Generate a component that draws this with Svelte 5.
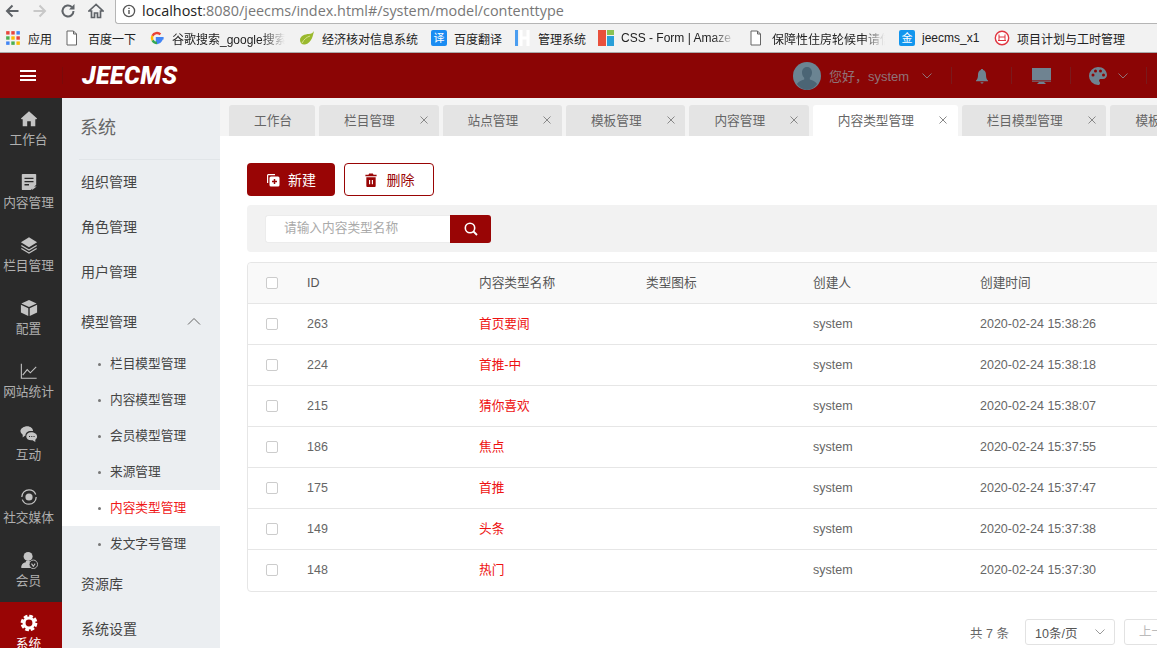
<script>
  const bookmarks = [
    { icon: 'apps', label: '应用', w: 60, lw: 26 },
    { icon: 'doc', label: '百度一下', w: 84, lw: 50 },
    { icon: 'g', label: '谷歌搜索_google搜索', w: 150, lw: 113, fade: true },
    { icon: 'leaf', label: '经济核对信息系统', w: 132, lw: 97 },
    { icon: 'yi', label: '百度翻译', w: 84, lw: 50 },
    { icon: 'h', label: '管理系统', w: 83, lw: 50 },
    { icon: 'css', label: 'CSS - Form | Amaze', w: 151, lw: 114, fade: true },
    { icon: 'doc', label: '保障性住房轮候申请信', w: 150, lw: 113, fade: true },
    { icon: 'jin', label: 'jeecms_x1', w: 95, lw: 60 },
    { icon: 'bot', label: '项目计划与工时管理', w: 140, lw: 110 }
  ];
  const rail = [
    { icon: 'home', label: '工作台' },
    { icon: 'content', label: '内容管理' },
    { icon: 'layers', label: '栏目管理' },
    { icon: 'cube', label: '配置' },
    { icon: 'chart', label: '网站统计' },
    { icon: 'chat', label: '互动' },
    { icon: 'media', label: '社交媒体' },
    { icon: 'user', label: '会员' },
    { icon: 'gear', label: '系统', active: true }
  ];
  const topMenu = ['组织管理', '角色管理', '用户管理'];
  const subMenu = ['栏目模型管理', '内容模型管理', '会员模型管理', '来源管理', '内容类型管理', '发文字号管理'];
  const tabs = [
    { label: '工作台', fixed: true },
    { label: '栏目管理' },
    { label: '站点管理' },
    { label: '模板管理' },
    { label: '内容管理' },
    { label: '内容类型管理', active: true },
    { label: '栏目模型管理' },
    { label: '模板类型管理' }
  ];
  const rows = [
    { id: 263, name: '首页要闻', time: '2020-02-24 15:38:26' },
    { id: 224, name: '首推-中', time: '2020-02-24 15:38:18' },
    { id: 215, name: '猜你喜欢', time: '2020-02-24 15:38:07' },
    { id: 186, name: '焦点', time: '2020-02-24 15:37:55' },
    { id: 175, name: '首推', time: '2020-02-24 15:37:47' },
    { id: 149, name: '头条', time: '2020-02-24 15:37:38' },
    { id: 148, name: '热门', time: '2020-02-24 15:37:30' }
  ];
</script>

<div class="page">
  <div class="toolbar">
    <div class="nav-buttons">
      <svg class="nav" viewBox="0 0 16 16"><path d="M14.500 8H3M8.500 2.500 3 8l5.500 5.500" fill="none" stroke="#5f6368" stroke-width="2"/></svg>
      <svg class="nav" viewBox="0 0 16 16"><path d="M1.500 8H13M7.500 2.500 13 8l-5.500 5.500" fill="none" stroke="#c8c8c8" stroke-width="2"/></svg>
      <svg class="nav" viewBox="0 0 16 16"><path d="M13.500 8a5.500 5.500 0 1 1-1.700-4" fill="none" stroke="#5f6368" stroke-width="2"/><path d="M14.500 1v5.500H9z" fill="#5f6368"/></svg>
      <svg class="nav" viewBox="0 0 16 16"><path d="M8 1.500 1 8h2.500v6.500h3V10h3v4.500h3V8H15z" fill="none" stroke="#5f6368" stroke-width="1.700"/></svg>
    </div>
    <div class="omnibox">
      <svg class="info" viewBox="0 0 14 14"><circle cx="7" cy="7" r="5.600" fill="none" stroke="#555" stroke-width="1.300"/><path d="M7 6v4M7 3.800v1.200" stroke="#555" stroke-width="1.400"/></svg>
      <span class="url"><span class="host">localhost</span>:8080/jeecms/index.html#/system/model/contenttype</span>
    </div>
  </div>

  <div class="bookmarks">
    {#each bookmarks as b}
      <div class="bookmark" style="width:{b.w}px">
        <span class="bm-icon">
          {#if b.icon === 'apps'}
            <svg viewBox="0 0 14 14">
              <g fill="#e8453c"><rect x="1" y="1" width="3" height="3"/><rect x="5.500" y="1" width="3" height="3"/></g>
              <rect x="10" y="1" width="3" height="3" fill="#4285f4"/>
              <rect x="1" y="5.500" width="3" height="3" fill="#4caf50"/>
              <rect x="5.500" y="5.500" width="3" height="3" fill="#fbbc05"/>
              <rect x="10" y="5.500" width="3" height="3" fill="#e8453c"/>
              <rect x="1" y="10" width="3" height="3" fill="#4285f4"/>
              <rect x="5.500" y="10" width="3" height="3" fill="#4caf50"/>
              <rect x="10" y="10" width="3" height="3" fill="#fbbc05"/>
            </svg>
          {:else if b.icon === 'doc'}
            <svg viewBox="0 0 14 16"><path d="M1 1H7.500l3 3v11H1zM7.500 1v3h3" fill="#fff" stroke="#666"/></svg>
          {:else if b.icon === 'g'}
            <svg viewBox="0 0 16 16">
              <path d="M14.600 8.200H8v2.600h3.800A4.200 4.200 0 0 1 8 13" fill="none" stroke="#4285f4" stroke-width="2.400"/>
              <path d="M8 13a5 5 0 0 1-4.500-2.800" fill="none" stroke="#34a853" stroke-width="2.400"/>
              <path d="M3.500 10.200a5 5 0 0 1 0-4.400" fill="none" stroke="#fbbc05" stroke-width="2.400"/>
              <path d="M3.500 5.800A5 5 0 0 1 11.400 4.400" fill="none" stroke="#ea4335" stroke-width="2.400"/>
            </svg>
          {:else if b.icon === 'leaf'}
            <svg viewBox="0 0 16 16"><path d="M15 1C14 5 13 13 6 14.500 3 15 1 13 1 10 1 6 6 4 10 4c2 0 4-1 5-3z" fill="#9ab92e"/><path d="M3 13c2-4 5-6 8-7" stroke="#d5e38c" fill="none"/></svg>
          {:else if b.icon === 'yi'}
            <span class="square blue">译</span>
          {:else if b.icon === 'h'}
            <svg viewBox="0 0 16 16"><rect x="0" y="0" width="3" height="16" fill="#4a9df0"/><path d="M6 0v16M13 0v16M6 8h7" stroke="#fff" stroke-width="3" fill="none"/></svg>
          {:else if b.icon === 'css'}
            <svg viewBox="0 0 16 16"><rect x="0" y="0" width="8" height="16" fill="#e9503c"/><rect x="9" y="0" width="7" height="5" fill="#8cc152"/><rect x="9" y="6" width="7" height="10" fill="#2a9fd8"/></svg>
          {:else if b.icon === 'jin'}
            <span class="square sky">金</span>
          {:else if b.icon === 'bot'}
            <svg viewBox="0 0 16 16"><circle cx="8" cy="8" r="6.700" fill="#fff" stroke="#e0343f" stroke-width="1.400"/><path d="M5 4.500v6M11 4.500v6M4 10.500h8M5 7h6" stroke="#e0343f" fill="none"/></svg>
          {/if}
        </span>
        <span class="bm-label" class:fade={b.fade} style="width:{b.lw}px">{b.label}</span>
      </div>
    {/each}
  </div>

  <header class="topbar">
    <button class="burger" aria-label="菜单"><i></i><i></i><i></i></button>
    <div class="logo-zone"><span class="logo">JEECMS</span></div>
    <div class="top-right">
      <svg class="avatar" viewBox="0 0 28 28">
        <circle cx="14" cy="14" r="14" fill="#6b8492"/>
        <path d="M14 5c3.300 0 5 2.500 5 5.500 0 2.200-.9 4-2.200 5.200v1.800c3 1.200 6 2 7.300 4.500A14 14 0 0 1 14 28a14 14 0 0 1-10.100-6c1.300-2.500 4.300-3.300 7.300-4.500v-1.800C9.900 14.500 9 12.700 9 10.500 9 7.500 10.700 5 14 5z" fill="#4b6575"/>
      </svg>
      <span class="greet">您好，system</span>
      <svg class="chev first" viewBox="0 0 10 6"><path d="M.5.500 5 5 9.500.5" fill="none" stroke="#8f7378"/></svg>
      <span class="vr d1"></span>
      <svg class="bell" viewBox="0 0 14 16"><path d="M7 1c.8 0 1.200.5 1.200 1.100C10.500 2.800 11 5 11 7c0 3 .8 4.500 2 5.500v.8H1v-.8C2.200 11.500 3 10 3 7c0-2 .5-4.200 2.800-4.900C5.800 1.500 6.200 1 7 1zM5.500 14.200h3c0 .8-.7 1.300-1.500 1.300s-1.500-.5-1.500-1.300z" fill="#6f8391"/></svg>
      <span class="vr d2"></span>
      <svg class="monitor" viewBox="0 0 19 16"><rect x="0" y="0" width="19" height="12" fill="#6f8391"/><rect x="0" y="12.600" width="19" height="1" fill="#6f8391"/><path d="M5 16h9l-2-2H7z" fill="#6f8391"/></svg>
      <span class="vr d3"></span>
      <svg class="palette" viewBox="0 0 18 18"><path fill-rule="evenodd" d="M9 0a9 9 0 0 0 0 18c1.400 0 2-.9 2-1.800 0-1.200-1-1.500-1-2.600 0-1 .8-1.600 1.800-1.600H14c2.300 0 4-1.500 4-3.900C18 3.500 14 0 9 0zM4 9.500a1.500 1.500 0 1 1 0-3 1.500 1.500 0 0 1 0 3zm2.500-4a1.500 1.500 0 1 1 0-3 1.500 1.500 0 0 1 0 3zm5 0a1.500 1.500 0 1 1 0-3 1.500 1.500 0 0 1 0 3zm3 4a1.500 1.500 0 1 1 0-3 1.500 1.500 0 0 1 0 3z" fill="#6f8391"/></svg>
      <svg class="chev second" viewBox="0 0 10 6"><path d="M.5.500 5 5 9.500.5" fill="none" stroke="#8f7378"/></svg>
      <span class="vr d4"></span>
    </div>
  </header>

  <div class="body">
    <nav class="rail">
      {#each rail as r}
        <div class="rail-item" class:active={r.active}>
          <svg class="rail-icon" viewBox="0 0 20 20">
            {#if r.icon === 'home'}
              <path d="M10 1.500 19 9.500l-.8.800H17V18h-5v-5.500H8V18H3v-7.700H1.800L1 9.500z" fill="currentColor"/>
            {:else if r.icon === 'content'}
              <path d="M3 1h14a1 1 0 0 1 1 1v11l-6 6H3a1 1 0 0 1-1-1V2a1 1 0 0 1 1-1z" fill="currentColor"/>
              <path d="M5 6h10M5 9.500h10M5 13h5" stroke="#2a2a2a" stroke-width="1.500"/>
              <path d="M13.500 19v-4h5z" fill="currentColor"/>
            {:else if r.icon === 'layers'}
              <path d="M10 1.500 19 7l-9 5.500L1 7z" fill="currentColor"/>
              <path d="M1.500 10.500 10 15.500l8.500-5M1.500 14 10 19l8.500-5" fill="none" stroke="currentColor" stroke-width="1.300"/>
            {:else if r.icon === 'cube'}
              <path d="M10 1 18.500 5 10 9 1.500 5z" fill="currentColor"/>
              <path d="M1 6.500l8.200 3.900V19L1 15zM19 6.500l-8.200 3.900V19L19 15z" fill="currentColor"/>
            {:else if r.icon === 'chart'}
              <path d="M1.500 2v16h17" fill="none" stroke="currentColor" stroke-width="1.200"/>
              <path d="M3 14.500 8 8.500l3.500 3.500L18 5.500" fill="none" stroke="currentColor" stroke-width="1.200"/>
            {:else if r.icon === 'chat'}
              <path d="M8 1.500c3.600 0 6.500 2.400 6.500 5.300H12C8.500 6.800 6 9 6 12H5.400L3 14v-3.200C1.500 9.800.5 8.200.5 6.800.5 3.900 4.400 1.500 8 1.500z" fill="currentColor"/>
              <path d="M12.500 8c3.500 0 6.500 1.900 6.500 4.800 0 1.500-.8 2.800-2 3.600V19l-3-2h-1.500C9 17 7 15.200 7 12.800 7 10 9 8 12.500 8z" fill="currentColor"/>
              <path d="M10 12.800h1.200M12.500 12.800h1.200M15 12.800h1.200" stroke="#2a2a2a" stroke-width="1.200"/>
            {:else if r.icon === 'media'}
              <circle cx="10" cy="10" r="8" fill="none" stroke="currentColor" stroke-width="1.400" stroke-dasharray="22 3 22 3"/>
              <circle cx="10" cy="10" r="4" fill="currentColor"/>
            {:else if r.icon === 'user'}
              <circle cx="9" cy="6" r="5" fill="currentColor"/>
              <path d="M6.500 11h5v1.500C14 13 13 16 12 19H1.500C1 16 3 13 6.500 12.500z" fill="currentColor"/>
              <circle cx="14.800" cy="14.800" r="4.700" fill="#2a2a2a" stroke="currentColor"/>
              <path d="M12.800 14 14.800 17l2-3" fill="none" stroke="currentColor" stroke-width="1.200"/>
            {:else if r.icon === 'gear'}
              <circle cx="10" cy="10" r="7.800" fill="none" stroke="currentColor" stroke-width="3" stroke-dasharray="4.100 2.030"/>
              <circle cx="10" cy="10" r="5.500" fill="none" stroke="currentColor" stroke-width="3.400"/>
            {/if}
          </svg>
          <span class="rail-label">{r.label}</span>
        </div>
      {/each}
    </nav>

    <aside class="subnav">
      <div class="subnav-title">系统</div>
      <ul class="menu top">
        {#each topMenu as m}<li>{m}</li>{/each}
      </ul>
      <div class="group-head">
        <span>模型管理</span>
        <svg viewBox="0 0 14 8"><path d="M1 7.500 7 1.500l6 6" fill="none" stroke="#666"/></svg>
      </div>
      <ul class="menu sub">
        {#each subMenu as m}
          <li class:current={m === '内容类型管理'}><i class="dot"></i>{m}</li>
        {/each}
      </ul>
      <ul class="menu bottom">
        <li>资源库</li>
        <li>系统设置</li>
      </ul>
    </aside>

    <main class="main">
      <div class="tabs">
        {#each tabs as t}
          <div class="tab" class:active={t.active} class:fixed={t.fixed}>
            <span>{t.label}</span>
            {#if !t.fixed}
              <svg viewBox="0 0 8 8"><path d="M.5.500l7 7M7.500.500l-7 7" stroke="#888" fill="none"/></svg>
            {/if}
          </div>
        {/each}
      </div>

      <div class="content">
        <div class="actions">
          <button class="btn primary">
            <svg viewBox="0 0 14 14"><path d="M1 2.500C1 1.700 1.700 1 2.500 1H9v1.200H2.500a.3.300 0 0 0-.3.300V10H1z" fill="#fff"/><rect x="3.500" y="3.500" width="10" height="10" rx="1.500" fill="#fff"/><path d="M8.500 6v5M6 8.500h5" stroke="#990505" stroke-width="1.500"/></svg>
            新建
          </button>
          <button class="btn outline">
            <svg viewBox="0 0 14 15"><path d="M5 .500h4l.7 1.500H13v1.500H1V2h3.300zM2 4.500h10V14a1 1 0 0 1-1 1H3a1 1 0 0 1-1-1z" fill="#990505"/><path d="M5.500 7.500v4.500M8.500 7.500v4.500" stroke="#fff" stroke-width="1.200"/></svg>
            删除
          </button>
        </div>

        <div class="searchbar">
          <div class="search-input">请输入内容类型名称</div>
          <button class="search-btn" aria-label="搜索">
            <svg viewBox="0 0 14 14"><circle cx="6" cy="6" r="4.700" fill="none" stroke="#fff" stroke-width="1.600"/><path d="M9.500 9.500l3.500 3.500" stroke="#fff" stroke-width="1.800"/></svg>
          </button>
        </div>

        <div class="table">
          <div class="row head">
            <span class="check"></span>
            <span>ID</span>
            <span class="cjk">内容类型名称</span>
            <span class="cjk">类型图标</span>
            <span class="cjk">创建人</span>
            <span class="cjk">创建时间</span>
          </div>
          {#each rows as r}
            <div class="row">
              <span class="check"></span>
              <span>{r.id}</span>
              <span class="name cjk">{r.name}</span>
              <span></span>
              <span>system</span>
              <span>{r.time}</span>
            </div>
          {/each}
        </div>

        <div class="pager">
          <span class="total">共 7 条</span>
          <div class="size">
            <span>10条/页</span>
            <svg viewBox="0 0 10 6"><path d="M.5.500 5 5 9.500.5" fill="none" stroke="#999"/></svg>
          </div>
          <div class="prev">上一页</div>
        </div>
      </div>
    </main>
  </div>
</div>

<style>
  :global(body) { margin: 0; overflow: hidden; background: #fff; }
  .page {
    width: 1157px; height: 648px; overflow: hidden;
    display: flex; flex-direction: column;
    font-family: "Liberation Sans", "Noto Sans CJK SC", sans-serif;
    color: #333;
  }
  button { border: 0; padding: 0; font: inherit; background: none; }
  ul { list-style: none; margin: 0; padding: 0; }

  .toolbar { height: 24px; flex: none; display: flex; background: #fff; }
  .nav-buttons { width: 115px; flex: none; height: 24px; background: #f2f2f2; display: flex; align-items: center; padding-left: 4px; box-sizing: border-box; gap: 12px; }
  .nav { width: 16px; height: 16px; flex: none; margin-bottom: 3px; }
  .omnibox { flex: 1; height: 24px; display: flex; align-items: center; border: 1px solid #b5b5b5; border-top: 0; border-right: 0; border-bottom-left-radius: 3px; box-sizing: border-box; padding-left: 6px; gap: 6px; padding-bottom: 2px; }
  .info { width: 14px; height: 14px; flex: none; }
  .url { font: 14.400px "Open Sans", sans-serif; color: #777; white-space: nowrap; }
  .host { color: #222; }

  .bookmarks { height: 29px; flex: none; display: flex; align-items: center; background: #f2f2f2; border-bottom: 1px solid #aaa; padding-left: 5px; box-sizing: border-box; overflow: hidden; }
  .bookmark { flex: none; display: flex; align-items: center; font-size: 12px; color: #222; }
  .bm-icon { width: 16px; height: 16px; flex: none; margin-right: 7px; display: flex; }
  .bm-icon svg { width: 16px; height: 16px; }
  .bm-label { white-space: nowrap; overflow: hidden; flex: none; }
  .bm-label.fade { -webkit-mask-image: linear-gradient(to right, #000 80%, transparent); mask-image: linear-gradient(to right, #000 80%, transparent); }
  .square { width: 16px; height: 16px; border-radius: 2px; color: #fff; font-size: 11px; line-height: 16px; text-align: center; }
  .blue { background: #1b8cf2; }
  .sky { background: #1296ee; }

  .topbar { height: 45px; flex: none; background: #8b0505; display: flex; align-items: center; }
  .burger { width: 63px; height: 17px; flex: none; display: flex; flex-direction: column; justify-content: center; gap: 2.500px; padding-left: 20px; box-sizing: border-box; border-right: 1px solid #7a0a0a; }
  .burger i { display: block; width: 16px; height: 2px; background: #fff; }
  .logo-zone { flex: 1; padding-left: 19px; }
  .logo { font: italic 900 25px/1 Roboto, sans-serif; color: #fff; letter-spacing: .4px; }
  .top-right { display: flex; align-items: center; height: 45px; padding-right: 10px; }
  .avatar { width: 28px; height: 28px; flex: none; }
  .greet { font-size: 13px; color: #8f7378; margin-left: 8px; width: 84px; white-space: nowrap; flex: none; }
  .chev { width: 10px; height: 6px; flex: none; }
  .vr { width: 1px; height: 17px; background: #7a1a1c; flex: none; }
  .chev.first { margin-left: 9px; }
  .d1 { margin-left: 19px; }
  .bell { width: 14px; height: 16px; margin-left: 23px; flex: none; }
  .d2 { margin-left: 22px; }
  .monitor { width: 19px; height: 16px; margin-left: 20px; flex: none; }
  .d3 { margin-left: 19px; }
  .palette { width: 18px; height: 18px; margin-left: 18px; flex: none; }
  .chev.second { margin-left: 11px; }
  .d4 { margin-left: 18px; }

  .body { flex: 1; min-height: 0; display: flex; }
  .rail { width: 62px; flex: none; background: #2a2a2a; overflow: hidden; }
  .rail-item { height: 63px; display: flex; flex-direction: column; align-items: center; color: #c4c4c4; box-sizing: border-box; padding: 12px 5px 0 0; }
  .rail-item.active { background: #990505; color: #fff; }
  .rail-icon { width: 18px; height: 18px; flex: none; }
  .rail-label { font-size: 12.700px; line-height: 20px; margin-top: 2px; color: #b0b0b0; white-space: nowrap; }
  .active .rail-label { color: #fff; }

  .subnav { width: 158px; flex: none; background: #ebeef1; overflow: hidden; font-size: 14px; color: #444; }
  .subnav-title { font-size: 18px; line-height: 24px; color: #666; padding: 18px 0 19px 1px; margin-left: 17px; border-bottom: 1px solid #e1e5e8; }
  .menu.top li { height: 45px; line-height: 45px; padding-left: 19px; }
  .group-head { height: 52px; display: flex; align-items: center; justify-content: space-between; padding: 0 19px; box-sizing: border-box; margin-bottom: -1px; }
  .group-head svg { width: 14px; height: 8px; flex: none; }
  .menu.sub li { height: 36px; line-height: 36px; font-size: 12.700px; display: flex; align-items: center; padding-left: 36px; white-space: nowrap; }
  .dot { width: 3px; height: 3px; border-radius: 50%; background: #777; margin-right: 9px; flex: none; }
  .menu.sub li.current { background: #fff; color: #f01818; }
  .menu.bottom li { height: 45px; line-height: 45px; padding-left: 19px; }

  .main { flex: 1; min-width: 0; background: #fff; overflow: hidden; }
  .tabs { height: 38px; background: #f4f4f4; display: flex; align-items: flex-end; gap: 4px; padding-left: 9px; box-sizing: border-box; overflow: hidden; }
  .tab { flex: none; height: 31px; background: #e4e4e4; border-radius: 3px 3px 0 0; display: flex; align-items: center; padding: 0 10.700px 2px 25px; font-size: 12.700px; color: #666; box-sizing: border-box; }
  .tab span { margin-right: 25px; white-space: nowrap; }
  .tab svg { width: 8px; height: 8px; flex: none; }
  .tab.fixed { padding: 0 23px 2px 25px; }
  .tab.fixed span { margin-right: 0; }
  .tab.active { background: #fff; }

  .content { padding: 27px 0 0 27px; box-sizing: border-box; width: 100%; }
  .actions { display: flex; gap: 9px; height: 33px; }
  .btn { width: 88px; height: 33px; border-radius: 4px; display: flex; align-items: center; justify-content: center; gap: 8px; font-size: 14px; box-sizing: border-box; padding-bottom: 2px; }
  .btn svg { width: 14px; height: 14px; flex: none; margin-top: 2px; }
  .btn.primary { background: #990505; color: #fff; }
  .btn.outline { width: 90px; background: #fff; border: 1px solid #990505; color: #990505; gap: 9px; }
  .searchbar { margin-top: 9px; height: 47px; background: #f2f2f2; border-radius: 4px 0 0 4px; display: flex; align-items: center; padding-left: 18px; box-sizing: border-box; }
  .search-input { width: 185px; height: 28px; line-height: 25px; background: #fff; border: 1px solid #ececec; border-right: 0; border-radius: 3px 0 0 3px; padding-left: 18px; font-size: 12.700px; color: #aaa; box-sizing: border-box; white-space: nowrap; }
  .search-btn { width: 41px; height: 28px; background: #990505; border-radius: 0 3px 3px 0; display: flex; align-items: center; justify-content: center; }
  .search-btn svg { width: 14px; height: 14px; }

  .table { margin-top: 10px; width: 1000px; border: 1px solid #e6e6e6; border-radius: 4px; box-sizing: border-box; padding-bottom: 1px; }
  .row { display: grid; grid-template-columns: 59px 172px 167px 167px 167px 1fr; align-items: center; height: 41px; border-top: 1px solid #e6e6e6; box-sizing: border-box; font-size: 12.500px; color: #666; padding-bottom: 1px; }
  .row.head { border-top: 0; height: 40px; background: #f9f9f9; color: #555; border-radius: 4px 4px 0 0; }
  .check { width: 12px; height: 12px; border: 1px solid #ccc; border-radius: 2px; margin-left: 18px; background: #fff; box-sizing: border-box; }
  .cjk { font-size: 12.700px; margin-top: -3px; }
  .name { color: #ee1111; }

  .pager { display: flex; align-items: center; margin-top: 27px; height: 26px; padding-left: 723px; font-size: 12.500px; color: #666; }
  .total { width: 55px; flex: none; white-space: nowrap; }
  .size { width: 90px; height: 26px; flex: none; border: 1px solid #e2e2e2; border-radius: 3px; display: flex; align-items: center; justify-content: space-between; padding: 0 9px; box-sizing: border-box; color: #555; }
  .size svg { width: 10px; height: 6px; flex: none; }
  .prev { width: 80px; height: 26px; flex: none; margin-left: 9px; border: 1px solid #e2e2e2; border-radius: 3px; line-height: 24px; padding-left: 14px; box-sizing: border-box; color: #bbb; }
</style>
